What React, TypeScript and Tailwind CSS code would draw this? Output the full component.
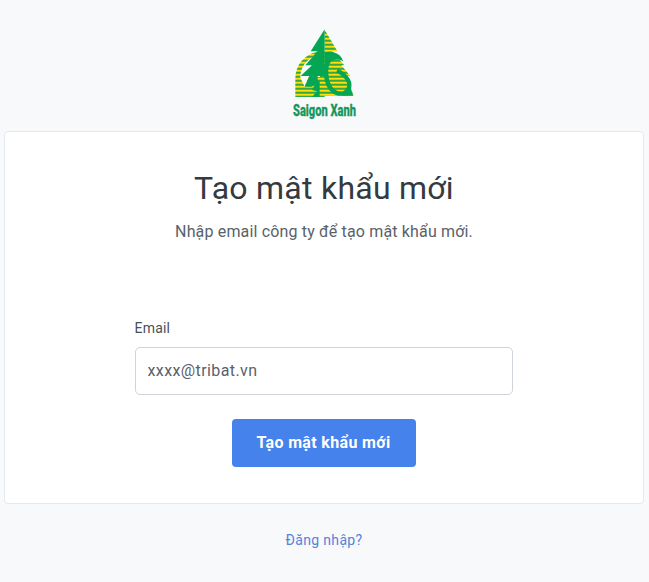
function Logo() {
  return (
    <svg className="overflow-visible" width="80" height="104" viewBox="0 0 240 312" role="img" aria-label="Saigon Xanh">
      <defs>
        <pattern id="stripes" width="240" height="12" y="11" patternUnits="userSpaceOnUse">
          <rect width="240" height="12" fill="#12a14e" />
          <rect width="240" height="6.6" fill="#ffde0a" />
        </pattern>
      </defs>
      <path d="M98 90C62 98 35 128 34 168V225H122V165H74L62 194L49 167C49 137 65 112 98 98Z" fill="url(#stripes)" />
      <path d="M122 23L160 88H145L181 130H172L199 162H190L208 221H108V90H122Z" fill="url(#stripes)" />
      <path d="M122 22L80 88H100L64 130H84L50 162H76L62 194H84L101 180V162H122Z" fill="#05a653" />
      <path d="M98 176H107V225H84L99 208L84 204L92 190Z" fill="#05a653" />
      <path d="M120 92C145 84 170 94 178 118C164 110 147 112 141 119L132 130L122 150V92Z" fill="#05a653" />
      <path d="M133 118C123 137 124 172 136 193C146 211 165 219 181 213C199 205 200 183 188 168C180 157 169 151 159 146" fill="none" stroke="#05a653" strokeWidth="13" />
      <path d="M164 222C188 220 195 208 199 197L208 221Z" fill="#05a653" />
      <text x="27" y="283" textLength="189" lengthAdjust="spacingAndGlyphs" fontFamily="Roboto, sans-serif" fontSize="48" fontWeight="800" fill="#16965a" stroke="#16965a" strokeWidth="1">Saigon Xanh</text>
    </svg>
  );
}

export default function App() {
  return (
    <main className="flex h-[582px] w-[649px] flex-col items-center bg-[#f7f9fb] pr-[2px] pt-[22px] font-['Roboto','Noto_Sans',sans-serif]">
      <Logo />
      <section className="mt-[5px] flex h-[373px] w-[640px] flex-col items-center rounded border border-[#e5e9ed] bg-white pt-[36px]">
        <h1 className="h-[40px] whitespace-nowrap pl-px text-[32px] leading-[40px] tracking-[0.25px] text-[#343a40]">Tạo mật khẩu mới</h1>
        <p className="mt-[12px] h-6 whitespace-nowrap pl-px text-base leading-6 tracking-[0.16px] text-[#596169]">Nhập email công ty để tạo mật khẩu mới.</p>
        <form className="mt-[74px] flex w-[378px] flex-col" onSubmit={(event) => event.preventDefault()}>
          <label htmlFor="email" className="text-sm leading-[21px] tracking-[0.2px] text-[#495057]">Email</label>
          <input id="email" type="email" defaultValue="xxxx@tribat.vn" className="mt-[8px] h-[48px] rounded-[5px] border border-[#ced4da] bg-white px-3 pb-0.5 text-base tracking-[0.4px] text-[#596169] outline-none" />
          <button type="submit" className="mt-6 h-[48px] w-[184px] self-center whitespace-nowrap rounded bg-[#4682eb] text-base font-bold tracking-[0.35px] text-white">Tạo mật khẩu mới</button>
        </form>
      </section>
      <a href="#login" className="mt-[26px] pl-px text-sm leading-[21px] tracking-[0.35px] text-[#5682db]">Đăng nhập?</a>
    </main>
  );
}
